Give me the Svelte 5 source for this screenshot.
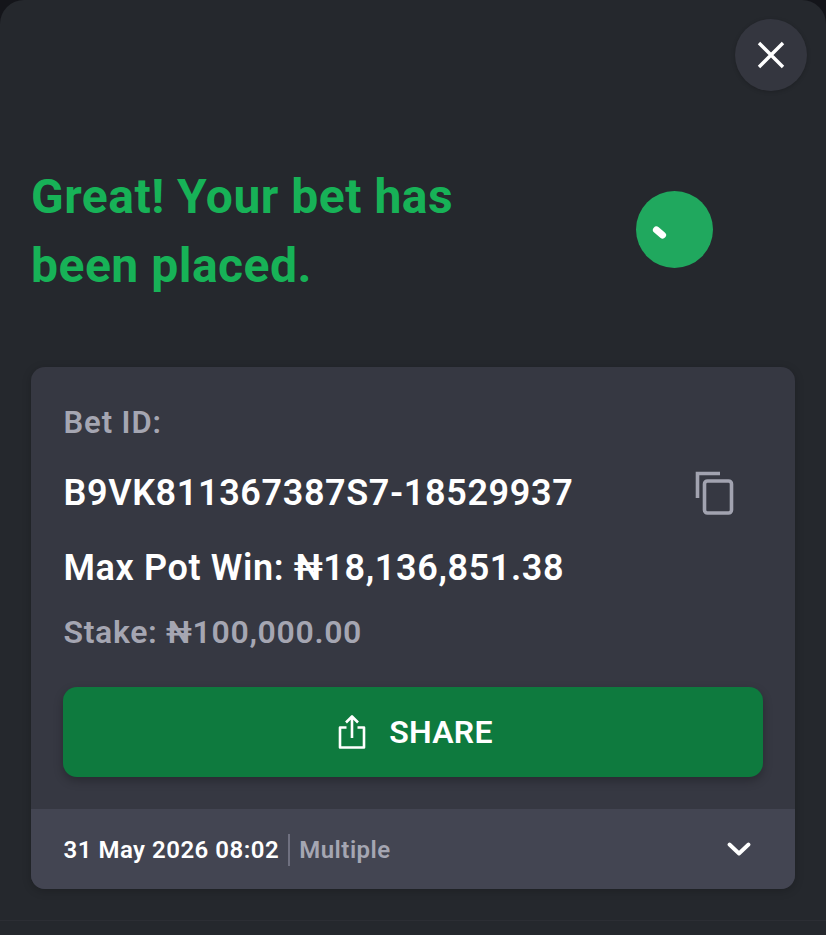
<script lang="ts">
  let expanded = $state(false);
</script>

<div class="page">
  <section class="sheet">
    <div class="top">
      <button class="close" aria-label="Close">
        <svg width="30" height="30" viewBox="0 0 30 30" fill="none" stroke="#fff" stroke-width="3.4">
          <path d="M3 3 27 27M27 3 3 27" />
        </svg>
      </button>
    </div>

    <div class="headline">
      <h1>Great! Your bet has<br />been placed.</h1>
      <div class="spinner">
        <span class="tick"></span>
      </div>
    </div>

    <div class="card">
      <div class="card-body">
        <div class="label">Bet ID:</div>
        <div class="id-row">
          <span class="bet-id">B9VK811367387S7-18529937</span>
          <svg class="copy" width="40" height="46" viewBox="0 0 40 46" fill="none" stroke="#a2a3b0" stroke-width="3.6">
            <path d="M2.5 28V3.5H25" />
            <rect x="9.5" y="11" width="27" height="32" rx="3" />
          </svg>
        </div>
        <div class="pot">Max Pot Win: ₦18,136,851.38</div>
        <div class="stake">Stake: ₦100,000.00</div>
        <button class="share">
          <svg width="30" height="36" viewBox="0 0 30 36" fill="none" stroke="#fff" stroke-width="2.6" stroke-linejoin="round">
            <path d="M15 24V3M9 8.5 15 2.5 21 8.5" />
            <path d="M9.5 13.5H3V33.5H27V13.5H20.5" />
          </svg>
          <span>SHARE</span>
        </button>
      </div>
      <div class="card-foot">
        <span class="date">31 May 2026 08:02</span>
        <span class="type">Multiple</span>
        <button class="toggle" aria-label="Toggle details" onclick={() => (expanded = !expanded)}>
          <svg width="24" height="16" viewBox="0 0 24 16" fill="none" stroke="#fff" stroke-width="3.8" stroke-linecap="round" stroke-linejoin="round">
            <path d="M2.5 3.5 12 12.5 21.5 3.5" />
          </svg>
        </button>
      </div>
    </div>
    <div class="bottom"></div>
  </section>
</div>

<style>
  :global(body) {
    margin: 0;
    background: #14151a;
    font-family: Roboto, "Noto Sans", sans-serif;
  }

  .page {
    width: 826px;
    height: 935px;
    overflow: hidden;
  }

  .sheet {
    height: 935px;
    box-sizing: border-box;
    background: #25282d;
    border-radius: 24px 24px 0 0;
    padding: 19px 19px 0 31px;
    display: flex;
    flex-direction: column;
  }

  .top {
    display: flex;
    justify-content: flex-end;
  }

  .close {
    width: 72px;
    height: 72px;
    border: 0;
    border-radius: 50%;
    background: #34363f;
    box-shadow: 0 1px 4px rgba(0, 0, 0, 0.2);
    display: flex;
    align-items: center;
    justify-content: center;
    padding: 0;
  }

  .headline {
    display: flex;
    align-items: center;
    margin-top: 72px;
    height: 136px;
  }

  h1 {
    margin: 0;
    width: 605px;
    font-size: 48px;
    line-height: 69px;
    font-weight: 700;
    letter-spacing: 0.5px;
    color: #17b257;
  }

  .spinner {
    width: 77px;
    height: 77px;
    margin-bottom: 4px;
    border-radius: 50%;
    background: #20a85e;
    position: relative;
  }

  .tick {
    position: absolute;
    left: 16px;
    top: 38px;
    width: 15px;
    height: 7px;
    border-radius: 4px;
    background: #fff;
    transform: rotate(40deg);
  }

  .card {
    width: 764px;
    margin-top: 68px;
    border-radius: 14px;
    overflow: hidden;
    background: #363842;
    box-shadow: 0 2px 10px rgba(0, 0, 0, 0.2);
  }

  .card-body {
    padding: 38px 32px 32px;
  }

  .label {
    padding-left: 0.5px;
    font-size: 31px;
    line-height: 36px;
    font-weight: 600;
    letter-spacing: 0.9px;
    color: #a5a6b2;
  }

  .id-row {
    display: flex;
    align-items: center;
    justify-content: space-between;
    margin-top: 29px;
    padding-left: 0.5px;
    padding-right: 28px;
    height: 46px;
  }

  .bet-id, .pot {
    font-size: 36px;
    font-weight: 600;
    letter-spacing: 0.62px;
    color: #fff;
  }

  .pot {
    margin-top: 31px;
    padding-left: 0.5px;
    line-height: 42px;
  }

  .stake {
    margin-top: 24px;
    padding-left: 0.5px;
    font-size: 32px;
    line-height: 38px;
    font-weight: 600;
    letter-spacing: 0.66px;
    color: #a5a6b2;
  }

  .share {
    width: 100%;
    height: 90px;
    margin-top: 36px;
    padding: 0 0 0 4px;
    border: 0;
    border-radius: 14px;
    background: #0e7a3e;
    box-shadow: 0 4px 10px rgba(0, 0, 0, 0.25);
    color: #fff;
    font-family: inherit;
    font-size: 32px;
    font-weight: 600;
    letter-spacing: 0.3px;
    display: flex;
    align-items: center;
    justify-content: center;
    gap: 22px;
  }

  .card-foot {
    height: 80px;
    box-sizing: border-box;
    padding: 1px 34px 0 32.5px;
    background: #434552;
    display: flex;
    align-items: center;
    font-size: 24px;
    font-weight: 600;
    letter-spacing: 0.5px;
  }

  .date {
    color: #fff;
    padding-right: 9px;
    border-right: 2px solid #6f7080;
    line-height: 32px;
  }

  .type {
    color: #a5a6b2;
    padding-left: 9px;
  }

  .toggle {
    margin-left: auto;
    margin-right: 10px;
    margin-top: -1px;
    padding: 0;
    border: 0;
    background: none;
    display: flex;
  }

  .bottom {
    margin: 31px -19px 0 -31px;
    border-top: 1px solid #2c2e34;
  }
</style>
